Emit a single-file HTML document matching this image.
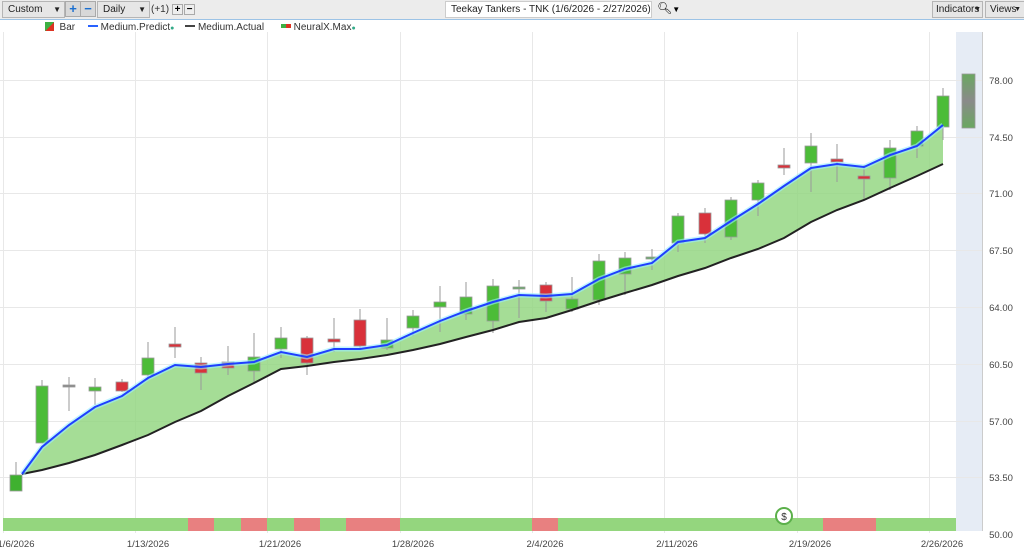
<!DOCTYPE html>
<html><head><meta charset="utf-8"><style>
body{margin:0;width:1024px;height:550px;overflow:hidden;background:#fff;font-family:"Liberation Sans",sans-serif;}
.tb{position:absolute;left:0;top:0;width:1024px;height:19px;background:#ececec;border-bottom:1px solid #9cc3e6;}
.bx{position:absolute;top:1px;height:15px;border:1px solid #b5b5b5;background:#e6e6e6;font-size:10px;line-height:15px;color:#222;padding-left:5px;box-sizing:content-box;white-space:nowrap;overflow:hidden}
.btn{position:absolute;top:1px;width:14px;height:14px;background:#d8d8d8;border:1px solid #aaa;color:#1a6fd0;font-weight:bold;font-size:13px;line-height:13px;text-align:center}
</style></head><body>
<div class="tb">
<div class="bx" style="left:2px;width:56px">Custom<span style="position:absolute;right:3px;font-size:8px">▼</span></div>
<div class="btn" style="left:65px">+</div>
<div class="btn" style="left:80px">−</div>
<div class="bx" style="left:97px;width:46px">Daily<span style="position:absolute;right:3px;font-size:8px">▼</span></div>
<div style="position:absolute;left:151px;top:4px;font-size:10px;color:#333">(+1)</div>
<div class="btn" style="left:172px;width:9px;height:9px;top:4px;font-size:10px;line-height:9px;color:#000;background:#eee">+</div>
<div class="btn" style="left:184px;width:9px;height:9px;top:4px;font-size:10px;line-height:9px;color:#000;background:#eee">−</div>
<div class="bx" style="left:445px;width:200px;background:#fff;border-color:#ccc">Teekay Tankers - TNK (1/6/2026 - 2/27/2026)</div>
<div style="position:absolute;left:657px;top:1px;font-size:12px">&#x1F50D;&#xFE0E;<span style="font-size:8px">▼</span></div>
<div class="bx" style="left:932px;width:46px;padding-left:3px">Indicators<span style="position:absolute;right:1px;font-size:7px">▼</span></div>
<div class="bx" style="left:985px;width:34px;padding-left:4px">Views<span style="position:absolute;right:3px;font-size:7px">▼</span></div>
</div>
<div style="position:absolute;top:22px;left:45px;font-size:10px;color:#333;white-space:nowrap">
<span style="display:inline-block;width:9px;height:9px;background:linear-gradient(135deg,#3cb043 50%,#d32 50%);vertical-align:-1px"></span>&nbsp; Bar
<span style="display:inline-block;width:10px;height:2px;background:#2962ff;vertical-align:3px;margin-left:10px"></span> Medium.Predict<span style="color:#3a8;font-size:7px">●</span>
<span style="display:inline-block;width:10px;height:2px;background:#444;vertical-align:3px;margin-left:8px"></span> Medium.Actual
<span style="display:inline-block;width:10px;height:4px;background:linear-gradient(90deg,#3cb043 50%,#d32 50%);vertical-align:2px;margin-left:14px"></span> NeuralX.Max<span style="color:#3a8;font-size:7px">●</span>
</div>
<svg width="1024" height="550" style="position:absolute;left:0;top:0" xmlns="http://www.w3.org/2000/svg">
<rect x="956" y="32" width="26" height="499" fill="#e6ecf5"/>
<g stroke="#e8e8e8" stroke-width="1">
<line x1="0" x2="982" y1="80.5" y2="80.5"/><line x1="0" x2="982" y1="137.5" y2="137.5"/><line x1="0" x2="982" y1="193.5" y2="193.5"/><line x1="0" x2="982" y1="250.5" y2="250.5"/><line x1="0" x2="982" y1="307.5" y2="307.5"/><line x1="0" x2="982" y1="364.5" y2="364.5"/><line x1="0" x2="982" y1="421.5" y2="421.5"/><line x1="0" x2="982" y1="477.5" y2="477.5"/>
<line x1="3.5" x2="3.5" y1="32" y2="533"/><line x1="135.5" x2="135.5" y1="32" y2="533"/><line x1="267.5" x2="267.5" y1="32" y2="533"/><line x1="400.5" x2="400.5" y1="32" y2="533"/><line x1="532.5" x2="532.5" y1="32" y2="533"/><line x1="664.5" x2="664.5" y1="32" y2="533"/><line x1="797.5" x2="797.5" y1="32" y2="533"/><line x1="929.5" x2="929.5" y1="32" y2="533"/>
</g>
<line x1="982.5" x2="982.5" y1="32" y2="531" stroke="#ccc"/>
<polygon fill="#8fd47c" fill-opacity="0.8" points="22,474 42,447 69,425 95,407 122,396 148,378 175,365 201,367 228,364 254,362 281,352 307,357 334,349 360,349 387,345 413,333 440,321 466,311 493,302 519,295 546,296 572,294 599,279 625,269 652,263 678,242 705,238 731,221 758,204 784,186 811,168 837,164 864,167 890,155 917,146 943,125 943,164 917,176 890,188 864,200 837,210 811,222 784,238 758,249 731,258 705,268 678,276 652,285 625,293 599,301 572,310 546,318 519,322 493,330 466,337 440,344 413,350 387,355 360,359 334,362 307,366 281,369 254,383 228,396 201,411 175,422 148,435 122,445 95,455 69,463 42,470 22,474"/>
<g stroke="#999" stroke-width="1">
<line x1="16" x2="16" y1="462" y2="491"/><line x1="42" x2="42" y1="380" y2="443"/><line x1="69" x2="69" y1="377" y2="411"/><line x1="95" x2="95" y1="378" y2="405"/><line x1="122" x2="122" y1="379" y2="392"/><line x1="148" x2="148" y1="342" y2="380"/><line x1="175" x2="175" y1="327" y2="358"/><line x1="201" x2="201" y1="357" y2="390"/><line x1="228" x2="228" y1="346" y2="375"/><line x1="254" x2="254" y1="333" y2="382"/><line x1="281" x2="281" y1="327" y2="358"/><line x1="307" x2="307" y1="336" y2="375"/><line x1="334" x2="334" y1="318" y2="352"/><line x1="360" x2="360" y1="309" y2="350"/><line x1="387" x2="387" y1="318" y2="350"/><line x1="413" x2="413" y1="310" y2="336"/><line x1="440" x2="440" y1="286" y2="332"/><line x1="466" x2="466" y1="282" y2="320"/><line x1="493" x2="493" y1="279" y2="333"/><line x1="519" x2="519" y1="280" y2="318"/><line x1="546" x2="546" y1="282" y2="312"/><line x1="572" x2="572" y1="277" y2="312"/><line x1="599" x2="599" y1="254" y2="305"/><line x1="625" x2="625" y1="252" y2="295"/><line x1="652" x2="652" y1="249" y2="270"/><line x1="678" x2="678" y1="213" y2="252"/><line x1="705" x2="705" y1="208" y2="243"/><line x1="731" x2="731" y1="197" y2="240"/><line x1="758" x2="758" y1="180" y2="216"/><line x1="784" x2="784" y1="148" y2="175"/><line x1="811" x2="811" y1="133" y2="192"/><line x1="837" x2="837" y1="144" y2="182"/><line x1="864" x2="864" y1="165" y2="200"/><line x1="890" x2="890" y1="140" y2="190"/><line x1="917" x2="917" y1="126" y2="158"/><line x1="943" x2="943" y1="88" y2="140"/>
</g>
<g stroke="#9a9a9a" stroke-width="0.8">
<rect x="10" y="475" width="12" height="16" fill="#3fb12f"/><rect x="36" y="386" width="12" height="57" fill="#4cbc38"/><rect x="63" y="385" width="12" height="2" fill="#888"/><rect x="89" y="387" width="12" height="4" fill="#4cbc38"/><rect x="116" y="382" width="12" height="9" fill="#d9313a"/><rect x="142" y="358" width="12" height="17" fill="#4cbc38"/><rect x="169" y="344" width="12" height="3" fill="#d9313a"/><rect x="195" y="363" width="12" height="10" fill="#d9313a"/><rect x="222" y="362" width="12" height="6" fill="#d9313a"/><rect x="248" y="357" width="12" height="14" fill="#4cbc38"/><rect x="275" y="338" width="12" height="11" fill="#4cbc38"/><rect x="301" y="338" width="12" height="25" fill="#d9313a"/><rect x="328" y="339" width="12" height="3" fill="#d9313a"/><rect x="354" y="320" width="12" height="26" fill="#d9313a"/><rect x="381" y="340" width="12" height="8" fill="#4cbc38"/><rect x="407" y="316" width="12" height="12" fill="#4cbc38"/><rect x="434" y="302" width="12" height="5" fill="#4cbc38"/><rect x="460" y="297" width="12" height="17" fill="#4cbc38"/><rect x="487" y="286" width="12" height="35" fill="#4cbc38"/><rect x="513" y="287" width="12" height="2" fill="#6a6"/><rect x="540" y="285" width="12" height="16" fill="#d9313a"/><rect x="566" y="299" width="12" height="10" fill="#4cbc38"/><rect x="593" y="261" width="12" height="39" fill="#4cbc38"/><rect x="619" y="258" width="12" height="16" fill="#4cbc38"/><rect x="646" y="257" width="12" height="2" fill="#6a6"/><rect x="672" y="216" width="12" height="27" fill="#4cbc38"/><rect x="699" y="213" width="12" height="21" fill="#d9313a"/><rect x="725" y="200" width="12" height="37" fill="#4cbc38"/><rect x="752" y="183" width="12" height="17" fill="#4cbc38"/><rect x="778" y="165" width="12" height="3" fill="#d9313a"/><rect x="805" y="146" width="12" height="17" fill="#4cbc38"/><rect x="831" y="159" width="12" height="3" fill="#d9313a"/><rect x="858" y="176" width="12" height="3" fill="#d9313a"/><rect x="884" y="148" width="12" height="30" fill="#4cbc38"/><rect x="911" y="131" width="12" height="15" fill="#4cbc38"/><rect x="937" y="96" width="12" height="31" fill="#4cbc38"/>
</g>
<defs><linearGradient id="g1" x1="0" x2="0" y1="0" y2="1"><stop offset="0" stop-color="#6aa860"/><stop offset="0.5" stop-color="#8a8a8a"/><stop offset="1" stop-color="#6aa860"/></linearGradient></defs>
<rect x="962" y="74" width="13" height="54" fill="url(#g1)" stroke="#999" stroke-width="0.8"/>
<polyline fill="none" stroke="#222" stroke-width="2" points="22,474 42,470 69,463 95,455 122,445 148,435 175,422 201,411 228,396 254,383 281,369 307,366 334,362 360,359 387,355 413,350 440,344 466,337 493,330 519,322 546,318 572,310 599,301 625,293 652,285 678,276 705,268 731,258 758,249 784,238 811,222 837,210 864,200 890,188 917,176 943,164"/>
<polyline fill="none" stroke="#9ef" stroke-width="5" stroke-opacity="0.6" points="22,474 42,447 69,425 95,407 122,396 148,378 175,365 201,367 228,364 254,362 281,352 307,357 334,349 360,349 387,345 413,333 440,321 466,311 493,302 519,295 546,296 572,294 599,279 625,269 652,263 678,242 705,238 731,221 758,204 784,186 811,168 837,164 864,167 890,155 917,146 943,125"/>
<polyline fill="none" stroke="#1f3fff" stroke-width="2" points="22,474 42,447 69,425 95,407 122,396 148,378 175,365 201,367 228,364 254,362 281,352 307,357 334,349 360,349 387,345 413,333 440,321 466,311 493,302 519,295 546,296 572,294 599,279 625,269 652,263 678,242 705,238 731,221 758,204 784,186 811,168 837,164 864,167 890,155 917,146 943,125"/>
<rect x="3" y="518" width="953" height="13" fill="#94d67e"/>
<g fill="#e88080"><rect x="188" y="518" width="26" height="13"/><rect x="241" y="518" width="26" height="13"/><rect x="294" y="518" width="26" height="13"/><rect x="346" y="518" width="54" height="13"/><rect x="532" y="518" width="26" height="13"/><rect x="823" y="518" width="53" height="13"/></g>
<circle cx="784" cy="516" r="8" fill="#fff" stroke="#5bb04a" stroke-width="2"/>
<text x="784" y="520" font-size="10" text-anchor="middle" fill="#333" font-family="Liberation Sans">$</text>
<g font-size="9.5" fill="#444" font-family="Liberation Sans" text-anchor="middle">
<text x="1001" y="84">78.00</text><text x="1001" y="141">74.50</text><text x="1001" y="197">71.00</text><text x="1001" y="254">67.50</text><text x="1001" y="311">64.00</text><text x="1001" y="368">60.50</text><text x="1001" y="425">57.00</text><text x="1001" y="481">53.50</text><text x="1001" y="538">50.00</text>
<text x="16" y="547">1/6/2026</text><text x="148" y="547">1/13/2026</text><text x="280" y="547">1/21/2026</text><text x="413" y="547">1/28/2026</text><text x="545" y="547">2/4/2026</text><text x="677" y="547">2/11/2026</text><text x="810" y="547">2/19/2026</text><text x="942" y="547">2/26/2026</text>
</g>
</svg>
</body></html>
